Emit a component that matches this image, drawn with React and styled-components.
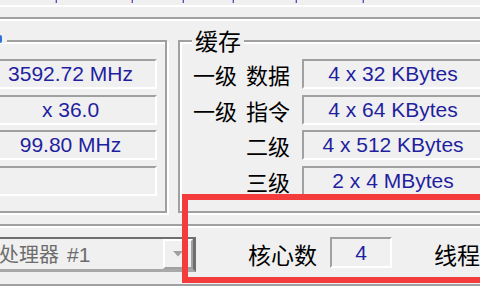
import React from 'react';
import styled, { createGlobalStyle } from 'styled-components';

const GlobalStyle = createGlobalStyle`
  html, body {
    margin: 0;
    padding: 0;
    background: #f0f0f0;
  }
`;

const Screen = styled.div`
  position: relative;
  width: 480px;
  height: 300px;
  overflow: hidden;
  background: #f0f0f0;
  font-family: "Liberation Sans", "Noto Sans CJK SC", sans-serif;
  display: flex;
  flex-direction: column;
`;

// bottoms of the tab captions peeking in at the top edge
const TabTicks = styled.div`
  display: flex;
  height: 3px;
  flex-shrink: 0;
`;

const Tick = styled.span`
  width: 2px;
  height: 3px;
  margin-left: ${(p) => p.$gap}px;
  background: linear-gradient(90deg, #e9a3b6 0 50%, #3b5bd3 50%);
`;

const TabBase = styled.div`
  flex-shrink: 0;
  height: 2px;
  margin-top: 2px;
  background: #fff;
`;

const EtchedRule = styled.div`
  flex-shrink: 0;
  margin-top: ${(p) => p.$top}px;
  border-top: 2px solid #a0a0a0;
  border-bottom: 2px solid #fff;
`;

const BoxesRow = styled.div`
  display: flex;
  flex-shrink: 0;
  margin-top: 19px;
`;

const GroupBox = styled.div`
  position: relative;
  flex-shrink: 0;
  box-sizing: border-box;
  width: ${(p) => p.$width}px;
  height: 173px;
  margin-left: ${(p) => p.$offset}px;
  padding: 17px 8px 0 ${(p) => p.$padLeft}px;
  border: 2px solid #a0a0a0;
  box-shadow: inset 2px 2px 0 #fff, 2px 2px 0 #fff;
`;

const Caption = styled.div`
  position: absolute;
  top: -14px;
  left: ${(p) => p.$left}px;
  display: flex;
  justify-content: flex-end;
  min-width: ${(p) => p.$minWidth || 0}px;
  padding: 0 3px;
  background: #f0f0f0;
  color: #000;
  font-family: "Noto Sans CJK SC", sans-serif;
  font-size: 23px;
  line-height: 24px;
`;

const BlueMark = styled.span`
  width: 3px;
  height: 8px;
  margin: 7px 2px 0 0;
  border-radius: 0 2px 2px 0;
  background: #2f6fd8;
`;

const FieldStack = styled.div`
  display: grid;
  grid-template-rows: repeat(4, 30px);
  row-gap: 5.5px;
`;

const CacheGrid = styled.div`
  display: grid;
  grid-template-columns: 110px 1fr;
  grid-template-rows: repeat(4, 30px);
  column-gap: 12px;
  row-gap: 5.5px;
`;

const Field = styled.div`
  box-sizing: border-box;
  display: flex;
  align-items: center;
  justify-content: center;
  height: ${(p) => p.$height || 30}px;
  width: ${(p) => (p.$width ? `${p.$width}px` : 'auto')};
  border-top: 2px solid #a0a0a0;
  border-left: 2px solid #a0a0a0;
  border-bottom: 2px solid #fff;
  border-right: 2px solid #fff;
  color: #1f1f9f;
  font-size: 21px;
  white-space: nowrap;
`;

const RowLabel = styled.div`
  justify-self: end;
  color: #000;
  font-family: "Noto Sans CJK SC", sans-serif;
  font-size: 22px;
  line-height: 30px;
  white-space: pre;
  word-spacing: 4px;
`;

const BottomRow = styled.div`
  display: flex;
  align-items: flex-start;
  flex-shrink: 0;
  margin-top: 9px;
`;

const Combo = styled.div`
  box-sizing: border-box;
  display: flex;
  align-items: center;
  flex-shrink: 0;
  width: 206px;
  height: 35px;
  margin-left: -10px;
  padding-left: 7px;
  border-style: solid;
  border-width: 2px 3px 3px 2px;
  border-color: #6e6e6e #6e6e6e #a8a8a8 #8a8a8a;
  color: #6d6d6d;
`;

const ComboText = styled.span`
  flex: 1;
  font-family: "Noto Sans CJK SC", sans-serif;
  font-size: 20px;
  line-height: 30px;
  white-space: nowrap;

  small {
    margin-left: 8px;
    font-family: "Liberation Sans", sans-serif;
    font-size: 21px;
  }
`;

const DropButton = styled.div`
  box-sizing: border-box;
  display: flex;
  align-items: center;
  justify-content: center;
  width: 30px;
  height: 30px;
  border-top: 2px solid #fff;
  border-left: 2px solid #fff;
  border-bottom: 2px solid #a0a0a0;
  border-right: 2px solid #a0a0a0;
  background: #f0f0f0;
`;

const CountLabel = styled.div`
  flex-shrink: 0;
  margin-left: ${(p) => p.$gap}px;
  color: #000;
  font-family: "Noto Sans CJK SC", sans-serif;
  font-size: 23px;
  line-height: 35px;
  white-space: nowrap;
`;

const CountField = styled(Field)`
  flex-shrink: 0;
  margin-left: 13px;
`;

const BottomFill = styled.div`
  flex: 1;
  margin-top: 12px;
  border-top: 2px solid #a0a0a0;
  background: #fff;
`;

const RedFrame = styled.div`
  position: absolute;
  left: 182px;
  top: 194px;
  box-sizing: border-box;
  width: 330px;
  height: 89px;
  border: 6px solid #f53c3c;
  pointer-events: none;
`;

const clocks = ['3592.72 MHz', 'x 36.0', '99.80 MHz', ''];

const cache = [
  ['一级 数据', '4 x 32 KBytes'],
  ['一级 指令', '4 x 64 KBytes'],
  ['二级', '4 x 512 KBytes'],
  ['三级', '2 x 4 MBytes'],
];

const tickGaps = [55, 74, 49, 48, 61, 65];

const App = () => (
  <Screen>
    <GlobalStyle />
    <TabTicks>
      {tickGaps.map((g, i) => (
        <Tick key={i} $gap={g} />
      ))}
    </TabTicks>
    <TabBase />
    <EtchedRule $top={10} />

    <BoxesRow>
      <GroupBox $offset={-20} $width={187} $padLeft={2}>
        <Caption $left={0} $minWidth={19}>
          <BlueMark />
        </Caption>
        <FieldStack>
          {clocks.map((v, i) => (
            <Field key={i}>{v}</Field>
          ))}
        </FieldStack>
      </GroupBox>

      <GroupBox $offset={11} $width={316} $padLeft={0}>
        <Caption $left={12}>缓存</Caption>
        <CacheGrid>
          {cache.map(([label, value]) => (
            <React.Fragment key={label}>
              <RowLabel>{label}</RowLabel>
              <Field>{value}</Field>
            </React.Fragment>
          ))}
        </CacheGrid>
      </GroupBox>
    </BoxesRow>

    <EtchedRule $top={11} />

    <BottomRow>
      <Combo>
        <ComboText>
          处理器<small>#1</small>
        </ComboText>
        <DropButton>
          <svg width="10" height="6" viewBox="0 0 10 6">
            <path d="M0 0 H10 L5 5.5 Z" fill="#a0a0a0" />
          </svg>
        </DropButton>
      </Combo>
      <CountLabel $gap={52}>核心数</CountLabel>
      <CountField $width={62} $height={31}>4</CountField>
      <CountLabel $gap={42}>线程</CountLabel>
    </BottomRow>

    <BottomFill />
    <RedFrame />
  </Screen>
);

export default App;
